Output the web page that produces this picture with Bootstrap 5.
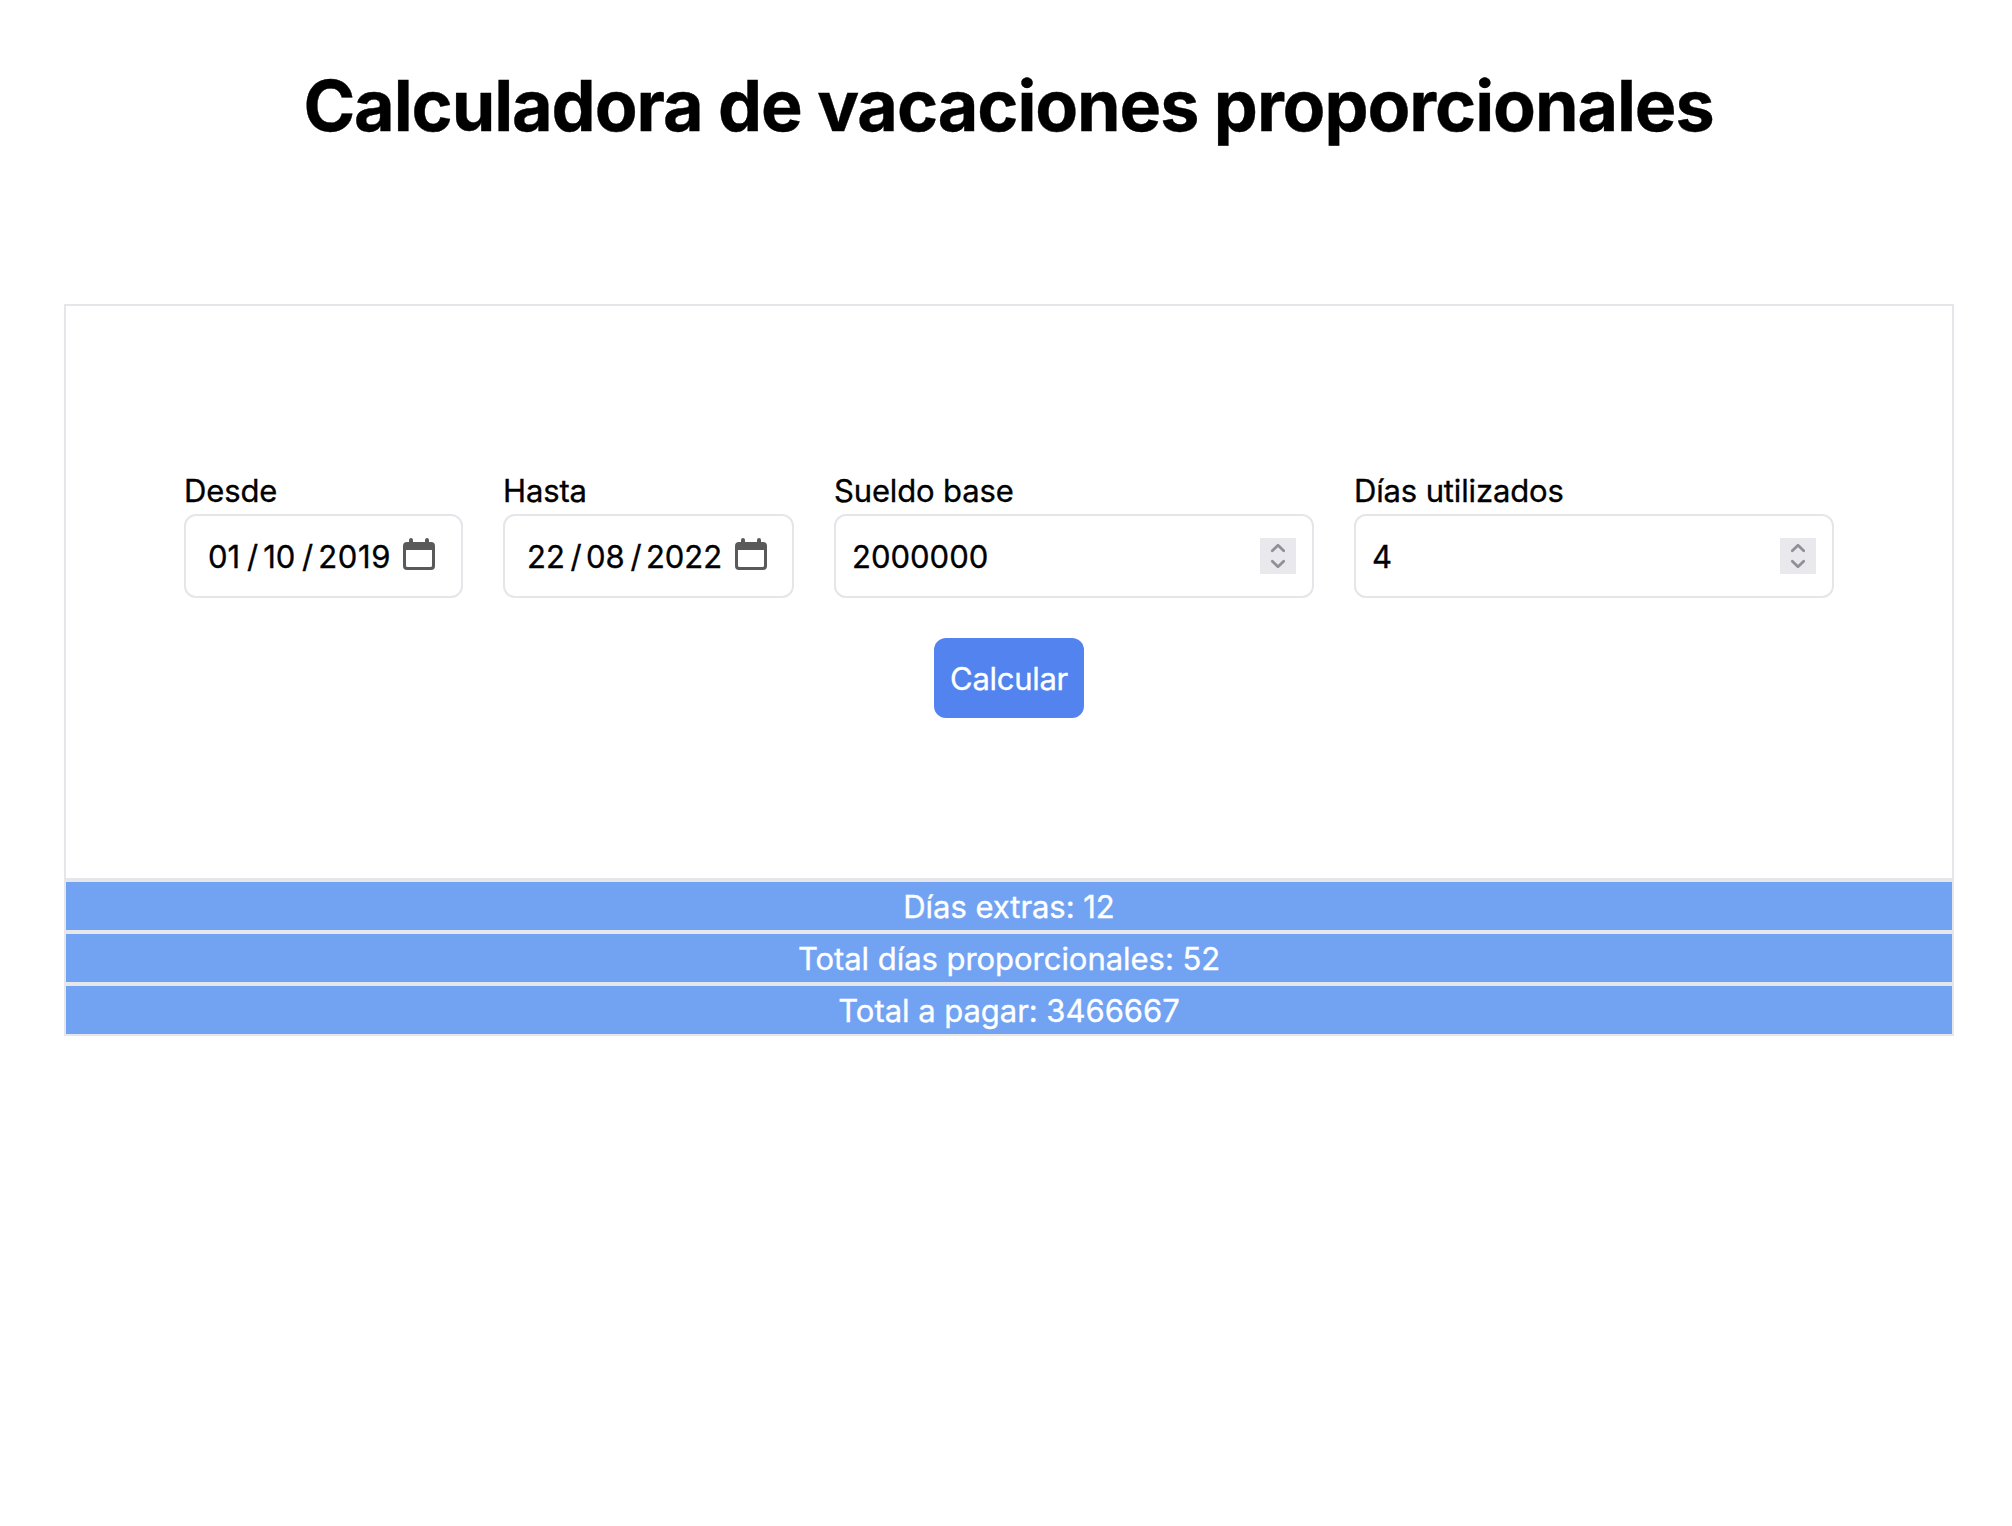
<!DOCTYPE html>
<html lang="es">
<head>
<meta charset="utf-8">
<meta name="viewport" content="width=device-width, initial-scale=1">
<title>Calculadora de vacaciones proporcionales</title>
<link href="https://cdn.jsdelivr.net/npm/bootstrap@5.3.0/dist/css/bootstrap.min.css" rel="stylesheet">
<style>
  body { font-family: Inter, "Liberation Sans", sans-serif; font-size: 31px; line-height: 49px; color: #000; background: #fff; min-height: 1526px; -webkit-text-stroke: .35px currentColor; }
  .page { padding: 65px 58px 0 64px; }
  .page-title { font-size: 70px; line-height: 81px; letter-spacing: -1.083px; margin: 0 0 158px -1px; }
  .calc-box { border: 2px solid #e5e5ea; height: 576px; padding-top: 160px; box-shadow: 0 0 6px rgba(0,0,0,.012); }
  .fields { gap: 40px; }
  .field-label { height: 48px; letter-spacing: -.14px; margin: 0; display: block; }
  .field-box { height: 84px; border: 2px solid #e5e5ea; border-radius: 12px; }
  .field-box svg { flex: none; }
  .date-from { width: 279px; padding: 0 26px 0 22px; }
  .date-to { width: 291px; padding: 0 25px 0 22px; }
  .date-from svg, .date-to svg { margin-bottom: 4px; }
  .date-from .slash { padding: 0 5px 0 6.800px; }
  .date-from .year { letter-spacing: .6px; }
  .date-to .slash { padding: 0 4.300px 0 5.700px; }
  .number-box { width: 480px; padding: 0 16px; }
  .number-box input { font: inherit; line-height: 49px; color: #000; padding: 0; height: 49px; border: 0; outline: 0; min-width: 0; background: transparent; -webkit-text-stroke: inherit; }
  .btn-calc { width: 150px; height: 80px; margin-top: 40px; padding: 0; border: 0; border-radius: 12px; background: #5283ee; color: #fff; font-size: 31px; line-height: 49px; letter-spacing: -.28px; }
  .btn-calc:hover { background: #4777e0; color: #fff; }
  .result-row { height: 52px; border: 2px solid #e5e7eb; background: #72a3f3; color: #fff; line-height: 49px; letter-spacing: -.04px; }
</style>
<script src="https://cdn.jsdelivr.net/npm/bootstrap@5.3.0/dist/js/bootstrap.bundle.min.js"></script>
</head>
<body>
<main class="page">
  <h1 class="page-title text-center fw-bold text-nowrap">Calculadora de vacaciones proporcionales</h1>
  <form class="calc-box">
    <div class="fields d-flex justify-content-center">
      <div>
        <label class="field-label">Desde</label>
        <div class="field-box date-from d-flex align-items-center">
          <span>01</span><span class="slash">/</span><span>10</span><span class="slash">/</span><span class="year">2019</span>
          <svg class="ms-auto" width="32" height="32" viewBox="0 0 32 32" fill="#5a5a5a" aria-hidden="true"><path fill-rule="evenodd" d="M6 4V2a2 2 0 0 1 4 0v2h12V2a2 2 0 0 1 4 0v2h2a4 4 0 0 1 4 4v20a4 4 0 0 1-4 4H4a4 4 0 0 1-4-4V8a4 4 0 0 1 4-4zM3 12v15.500a1.500 1.500 0 0 0 1.500 1.500h23a1.500 1.500 0 0 0 1.500-1.500V12z"/></svg>
        </div>
      </div>
      <div>
        <label class="field-label">Hasta</label>
        <div class="field-box date-to d-flex align-items-center">
          <span>22</span><span class="slash">/</span><span>08</span><span class="slash">/</span><span>2022</span>
          <svg class="ms-auto" width="32" height="32" viewBox="0 0 32 32" fill="#5a5a5a" aria-hidden="true"><path fill-rule="evenodd" d="M6 4V2a2 2 0 0 1 4 0v2h12V2a2 2 0 0 1 4 0v2h2a4 4 0 0 1 4 4v20a4 4 0 0 1-4 4H4a4 4 0 0 1-4-4V8a4 4 0 0 1 4-4zM3 12v15.500a1.500 1.500 0 0 0 1.500 1.500h23a1.500 1.500 0 0 0 1.500-1.500V12z"/></svg>
        </div>
      </div>
      <div>
        <label class="field-label" for="sueldo">Sueldo base</label>
        <div class="field-box number-box d-flex align-items-center">
          <input id="sueldo" class="flex-grow-1" type="text" inputmode="numeric" value="2000000">
          <svg width="36" height="36" viewBox="0 0 36 36" fill="none" stroke="#8f8f9a" stroke-width="2.800" stroke-linecap="round" stroke-linejoin="round" aria-hidden="true"><path d="M0 0h36v36H0z" fill="#e9e9ed" stroke="none"/><path d="M12.300 12.700 18 7.300l5.700 5.400M12.300 23.300 18 28.700l5.700-5.400"/></svg>
        </div>
      </div>
      <div>
        <label class="field-label" for="dias">Días utilizados</label>
        <div class="field-box number-box d-flex align-items-center">
          <input id="dias" class="flex-grow-1" type="text" inputmode="numeric" value="4">
          <svg width="36" height="36" viewBox="0 0 36 36" fill="none" stroke="#8f8f9a" stroke-width="2.800" stroke-linecap="round" stroke-linejoin="round" aria-hidden="true"><path d="M0 0h36v36H0z" fill="#e9e9ed" stroke="none"/><path d="M12.300 12.700 18 7.300l5.700 5.400M12.300 23.300 18 28.700l5.700-5.400"/></svg>
        </div>
      </div>
    </div>
    <div class="d-flex justify-content-center">
      <button type="button" class="btn btn-calc">Calcular</button>
    </div>
  </form>
  <div class="text-center">
    <div class="result-row">Días extras: 12</div>
    <div class="result-row">Total días proporcionales: 52</div>
    <div class="result-row">Total a pagar: 3466667</div>
  </div>
</main>
</body>
</html>
